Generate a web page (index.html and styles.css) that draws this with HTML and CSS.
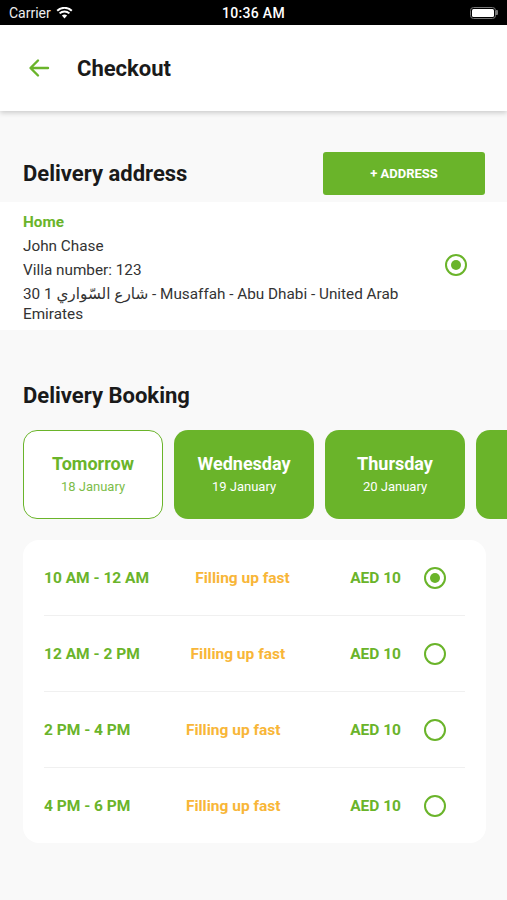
FILE: index.html
```html
<!DOCTYPE html>
<html lang="en">
<head>
    <meta charset="UTF-8">
    <meta name="viewport" content="width=device-width, initial-scale=1.0">
    <title>Checkout</title>
    <link rel="stylesheet" href="styles.css">
</head>
<body>
    <div class="status-bar">
        <div class="carrier">
            Carrier
            <svg class="wifi" width="17" height="12" viewBox="0 0 17 12">
                <path d="M8.5 11.5 L5.9 8.6 A3.8 3.8 0 0 1 11.1 8.6 Z" fill="#fff"/>
                <path d="M3.6 6.4 A7 7 0 0 1 13.4 6.4" stroke="#fff" stroke-width="2" fill="none"/>
                <path d="M1.2 3.8 A10.5 10.5 0 0 1 15.8 3.8" stroke="#fff" stroke-width="2" fill="none"/>
            </svg>
        </div>
        <div class="clock">10:36 AM</div>
        <div class="battery">
            <span class="battery-body"><span class="battery-level"></span></span>
            <span class="battery-nub"></span>
        </div>
    </div>

    <div class="topbar">
        <svg class="back" width="24" height="24" viewBox="0 0 24 24">
            <path d="M21 12 H4 M11 4.5 L3.5 12 L11 19.5" stroke="#6ab42a" stroke-width="2.4" fill="none" stroke-linecap="round" stroke-linejoin="round"/>
        </svg>
        <h1>Checkout</h1>
    </div>

    <div class="section-head">
        <h2>Delivery address</h2>
        <a class="btn" href="#">+ ADDRESS</a>
    </div>

    <div class="address">
        <div class="address-text">
            <div class="address-label">Home</div>
            <div class="address-line">John Chase</div>
            <div class="address-line">Villa number: 123</div>
            <div class="address-line">30 1 شارع السّواري - Musaffah - Abu Dhabi - United Arab Emirates</div>
        </div>
        <div class="address-pick">
            <span class="radio checked"></span>
        </div>
    </div>

    <h2 class="booking-title">Delivery Booking</h2>

    <div class="days">
        <div class="day selected">
            <div class="day-name">Tomorrow</div>
            <div class="day-date">18 January</div>
        </div>
        <div class="day">
            <div class="day-name">Wednesday</div>
            <div class="day-date">19 January</div>
        </div>
        <div class="day">
            <div class="day-name">Thursday</div>
            <div class="day-date">20 January</div>
        </div>
        <!-- next day, scrolled out of view -->
        <div class="day"></div>
    </div>

    <div class="slots">
        <div class="slot">
            <span class="slot-time">10 AM - 12 AM</span>
            <span class="slot-note">Filling up fast</span>
            <span class="slot-right"><span class="slot-price">AED 10</span><span class="radio checked"></span></span>
        </div>
        <div class="slot">
            <span class="slot-time">12 AM - 2 PM</span>
            <span class="slot-note">Filling up fast</span>
            <span class="slot-right"><span class="slot-price">AED 10</span><span class="radio"></span></span>
        </div>
        <div class="slot">
            <span class="slot-time">2 PM - 4 PM</span>
            <span class="slot-note">Filling up fast</span>
            <span class="slot-right"><span class="slot-price">AED 10</span><span class="radio"></span></span>
        </div>
        <div class="slot">
            <span class="slot-time">4 PM - 6 PM</span>
            <span class="slot-note">Filling up fast</span>
            <span class="slot-right"><span class="slot-price">AED 10</span><span class="radio"></span></span>
        </div>
    </div>
</body>
</html>
```

FILE: styles.css
```css
* { margin: 0; padding: 0; box-sizing: border-box; }

body {
    font-family: Roboto, "DejaVu Sans", sans-serif;
    background: #f9f9f9;
    color: #1c1c1c;
    width: 507px;
    height: 900px;
    overflow: hidden;
}

.status-bar {
    background: #000;
    color: #fff;
    height: 25px;
    display: flex;
    align-items: center;
    justify-content: space-between;
    padding: 0 9px;
    font-size: 14px;
    position: relative;
}

.carrier {
    display: flex;
    align-items: center;
    gap: 5px;
    color: #eee;
}

.clock {
    position: absolute;
    left: 0;
    right: 0;
    text-align: center;
    font-weight: 500;
    letter-spacing: 0.3px;
}

.battery {
    display: flex;
    align-items: center;
}

.battery-body {
    width: 26px;
    height: 12px;
    border: 1.5px solid #777;
    border-radius: 3.5px;
    padding: 1px;
    display: flex;
}

.battery-level {
    flex: 1;
    background: #fff;
    border-radius: 1.5px;
}

.battery-nub {
    width: 2px;
    height: 5px;
    background: #777;
    border-radius: 0 1px 1px 0;
}

.topbar {
    background: #fff;
    height: 86px;
    display: flex;
    align-items: center;
    padding-left: 27px;
    box-shadow: 0 2px 5px rgba(0, 0, 0, 0.18);
    position: relative;
}

.back {
    margin-right: 26px;
}

h1 {
    font-size: 22px;
    font-weight: 700;
    color: #1a1a1a;
}

h2 {
    font-size: 22px;
    font-weight: 700;
    color: #1a1a1a;
}

.section-head {
    display: flex;
    align-items: center;
    justify-content: space-between;
    padding: 41px 22px 7px 23px;
}

.btn {
    display: flex;
    align-items: center;
    justify-content: center;
    width: 162px;
    height: 43px;
    background: #6ab42a;
    color: #fff;
    font-size: 13px;
    font-weight: 700;
    text-decoration: none;
    border-radius: 3px;
}

.address {
    background: #fff;
    display: flex;
    align-items: center;
    padding: 10px 0 6px 23px;
}

.address-text {
    flex: 1;
    font-size: 15.3px;
    line-height: 20px;
    color: #333;
}

.address-label {
    color: #6ab42a;
    font-weight: 700;
}

.address-line {
    margin-top: 4px;
}

.address-pick {
    width: 106px;
    display: flex;
    justify-content: center;
    padding: 0 0 6px 4px;
}

.radio {
    width: 22px;
    height: 22px;
    border: 2.5px solid #6ab42a;
    border-radius: 50%;
    display: flex;
    align-items: center;
    justify-content: center;
    flex-shrink: 0;
}

.radio.checked::after {
    content: "";
    width: 10px;
    height: 10px;
    border-radius: 50%;
    background: #6ab42a;
}

.booking-title {
    margin: 52px 0 20px 23px;
    line-height: 28px;
}

.days {
    display: flex;
    gap: 11px;
    padding-left: 23px;
    overflow: hidden;
}

.day {
    flex: 0 0 140px;
    height: 89px;
    border-radius: 14px;
    background: #6ab42a;
    color: #fff;
    display: flex;
    flex-direction: column;
    align-items: center;
    justify-content: center;
}

.day.selected {
    background: #fff;
    border: 1.5px solid #6ab42a;
    color: #6ab42a;
}

.day-name {
    font-size: 18px;
    font-weight: 700;
    line-height: 22px;
}

.day-date {
    font-size: 13px;
    line-height: 20px;
    margin-top: 2px;
}

.day.selected .day-date {
    color: #7dbd4a;
}

.slots {
    margin: 21px 21px 0 23px;
    background: #fff;
    border-radius: 16px;
    padding: 0 21px;
}

.slot {
    height: 76px;
    display: flex;
    align-items: center;
    justify-content: space-between;
    border-bottom: 1px solid #f0f0f0;
    font-size: 15.5px;
    font-weight: 700;
}

.slot:last-child {
    border-bottom: none;
    height: 75px;
}

.slot-time {
    color: #6ab42a;
}

.slot-note {
    color: #f8b638;
}

.slot-right {
    width: 129px;
    display: flex;
    align-items: center;
    justify-content: flex-end;
    gap: 23px;
    padding-right: 19px;
}

.slot-price {
    color: #6ab42a;
}
```
